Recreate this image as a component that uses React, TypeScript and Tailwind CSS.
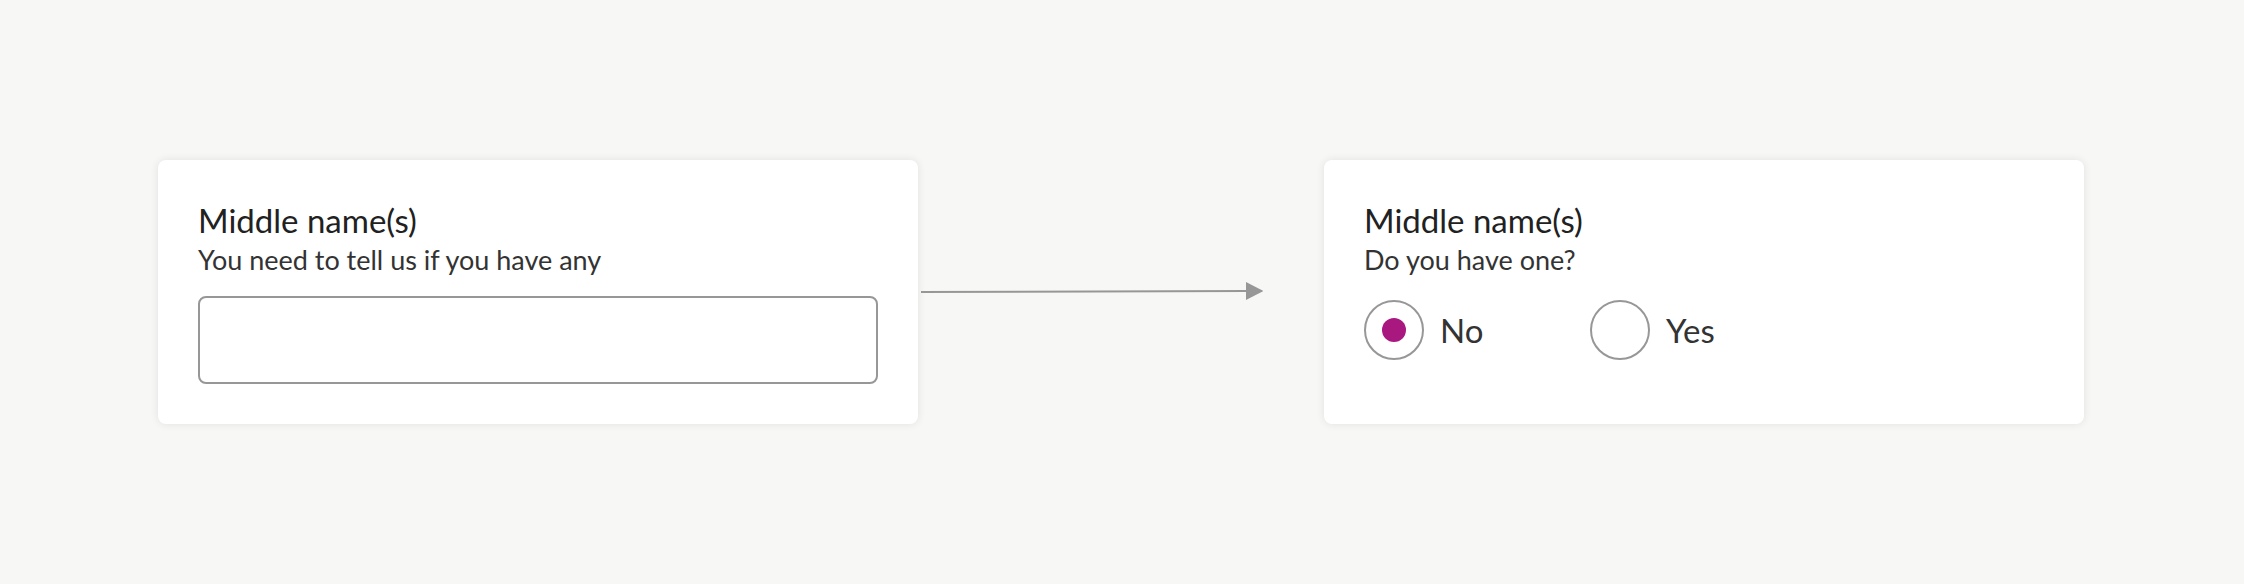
import type { ReactNode } from "react";

const titleClass = "block text-[33px] leading-10 text-[#212121]";
const hintClass = "block text-[27px] leading-10 text-[#333333]";

function Card({ children }: { children: ReactNode }) {
  return (
    <section className="min-w-0 flex-1 rounded-lg bg-white p-10 shadow-[0_0_8px_rgba(0,0,0,0.09)]">
      {children}
    </section>
  );
}

function Connector() {
  return (
    <div className="w-[406px] shrink-0 self-center pr-[61px] pl-[3px]">
      <svg viewBox="0 0 342 20" className="block w-full" aria-hidden="true">
        <line x1="0" y1="10" x2="326" y2="9" stroke="#979797" strokeWidth="2" />
        <path d="M325 0 L342.5 9 L325 18 Z" fill="#979797" />
      </svg>
    </div>
  );
}

function Radio({ id, label, checked }: { id: string; label: string; checked?: boolean }) {
  return (
    <div className="flex w-[226px] items-center gap-4">
      <input
        id={id}
        type="radio"
        name="has-middle-name"
        defaultChecked={checked}
        className="grid size-[60px] shrink-0 appearance-none place-content-center rounded-full border-2 border-[#979797] bg-white checked:before:block checked:before:size-6 checked:before:rounded-full checked:before:bg-[#a8187f] checked:before:content-['']"
      />
      <label htmlFor={id} className="text-[33px] leading-10 text-[#333333]">
        {label}
      </label>
    </div>
  );
}

export default function App() {
  return (
    <main className="flex min-h-screen items-center bg-[#f7f7f5] pr-[160px] pl-[158px] font-['Lato',sans-serif]">
      <div className="flex w-full">
        <Card>
          <label htmlFor="middle-name" className={titleClass}>
            Middle name(s)
          </label>
          <p id="middle-name-hint" className={hintClass}>
            You need to tell us if you have any
          </p>
          <input
            id="middle-name"
            type="text"
            aria-describedby="middle-name-hint"
            className="mt-4 block h-[88px] w-full rounded-lg border-2 border-[#979797] bg-white px-4 text-[33px] text-[#333333]"
          />
        </Card>
        <Connector />
        <Card>
          <fieldset aria-describedby="has-middle-name-hint">
            <legend className={titleClass}>Middle name(s)</legend>
            <p id="has-middle-name-hint" className={hintClass}>
              Do you have one?
            </p>
            <div className="mt-5 flex">
              <Radio id="middle-name-no" label="No" checked />
              <Radio id="middle-name-yes" label="Yes" />
            </div>
          </fieldset>
        </Card>
      </div>
    </main>
  );
}
